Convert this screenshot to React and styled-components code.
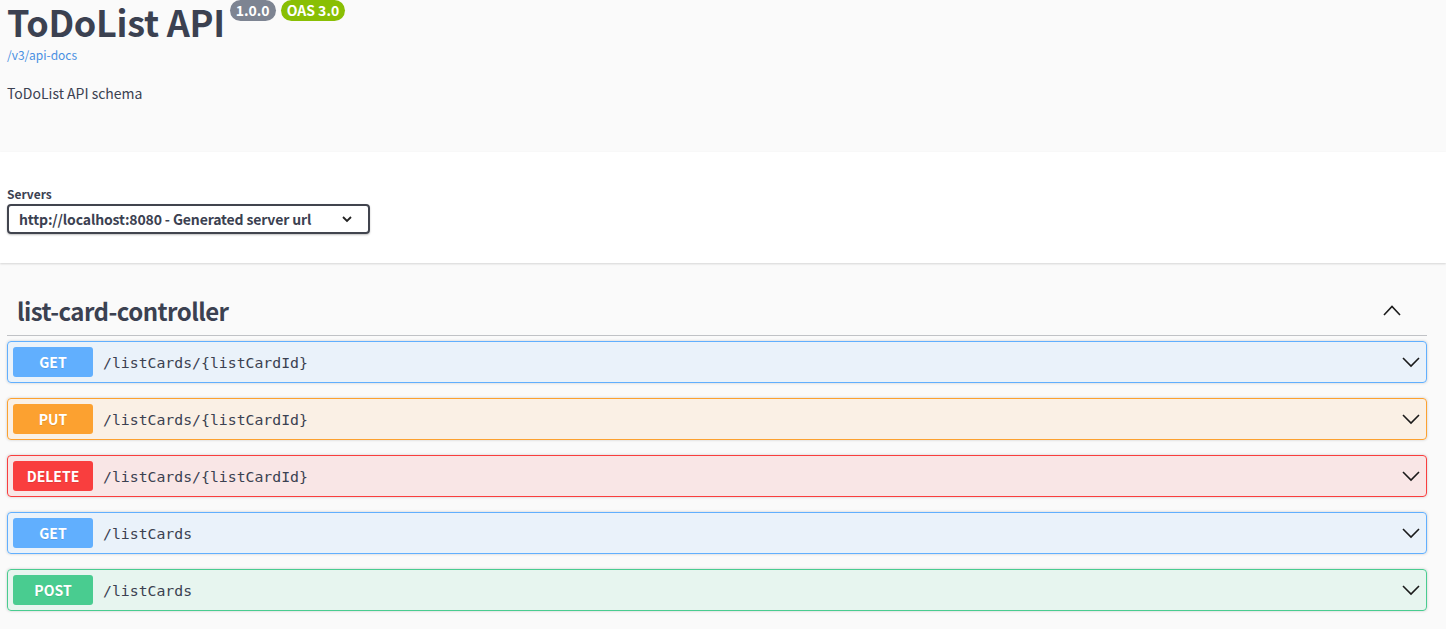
import React from 'react';
import styled, { createGlobalStyle } from 'styled-components';

const Global = createGlobalStyle`
  html, body { margin: 0; padding: 0; background: #fafafa; }
  body { font-family: "Noto Sans CJK KR", "Noto Sans", sans-serif; color: #3b4151; }
`;

const methods = {
  GET: { color: '#61affe', bg: 'rgba(97,175,254,.1)' },
  PUT: { color: '#fca130', bg: 'rgba(252,161,48,.1)' },
  DELETE: { color: '#f93e3e', bg: 'rgba(249,62,62,.1)' },
  POST: { color: '#49cc90', bg: 'rgba(73,204,144,.1)' },
};

const ops = [
  { method: 'GET', path: '/listCards/{listCardId}' },
  { method: 'PUT', path: '/listCards/{listCardId}' },
  { method: 'DELETE', path: '/listCards/{listCardId}' },
  { method: 'GET', path: '/listCards' },
  { method: 'POST', path: '/listCards' },
];

const Info = styled.div`
  background: #fafafa;
  height: 152px;
  padding: 0 7px;
  box-sizing: border-box;
`;

const TitleRow = styled.div`
  display: flex;
  align-items: flex-start;
  gap: 5px;
  height: 42px;
`;

const Title = styled.h2`
  margin: 0;
  font-size: 36px;
  font-weight: 700;
  line-height: 42px;
  color: #3b4151;
  letter-spacing: -0.3px;
`;

const Badge = styled.span`
  display: inline-block;
  background: ${p => p.$bg};
  color: #fff;
  font-size: 14px;
  font-weight: 700;
  line-height: 21px;
  height: 21px;
  padding: 0 6px;
  border-radius: 57px;
`;

const Badges = styled.div`
  display: flex;
  gap: 5px;
`;

const Link = styled.a`
  display: block;
  font-size: 12px;
  color: #4990e2;
  line-height: 16px;
  margin-top: 5px;
  text-decoration: none;
`;

const Description = styled.p`
  margin: 20px 0 0;
  font-size: 14px;
  line-height: 20px;
`;

const SchemeBar = styled.div`
  background: #fff;
  height: 111px;
  box-shadow: 0 1px 2px 0 rgba(0,0,0,.15);
  padding: 34px 7px 0;
  box-sizing: border-box;
`;

const Label = styled.div`
  font-size: 12px;
  font-weight: 700;
  line-height: 16px;
  margin-bottom: 2px;
`;

const Select = styled.div`
  width: 363px;
  height: 30px;
  box-sizing: border-box;
  border: 2px solid #41444e;
  border-radius: 4px;
  box-shadow: 0 1px 2px 0 rgba(0,0,0,.25);
  display: flex;
  align-items: center;
  justify-content: space-between;
  padding: 0 16px 0 10px;
  font-size: 14px;
  font-weight: 700;
  letter-spacing: -0.14px;
  color: #3b4151;
`;

const Content = styled.div`
  padding: 25px 19px 0 7px;
`;

const TagHeader = styled.div`
  display: flex;
  align-items: center;
  justify-content: space-between;
  height: 48px;
  box-sizing: border-box;
  padding: 0 25px 1px 10px;
  border-bottom: 1px solid rgba(59,65,81,.3);
  margin-bottom: 5px;
`;

const TagName = styled.h3`
  margin: 0;
  font-size: 24px;
  font-weight: 700;
  line-height: 30px;
  letter-spacing: -0.55px;
`;

const Op = styled.div`
  display: flex;
  align-items: center;
  height: 42px;
  box-sizing: border-box;
  border: 1px solid ${p => p.$color};
  background: ${p => p.$bg};
  border-radius: 4px;
  box-shadow: 0 0 3px rgba(0,0,0,.19);
  margin-bottom: 15px;
  padding: 0 5px 0 5px;
`;

const Method = styled.span`
  width: 80px;
  height: 30px;
  background: ${p => p.$color};
  border-radius: 3px;
  color: #fff;
  font-size: 14px;
  font-weight: 700;
  display: flex;
  align-items: center;
  justify-content: center;
  text-shadow: 0 1px 0 rgba(0,0,0,.1);
`;

const Path = styled.span`
  flex: 1;
  margin-left: 10px;
  font-family: "DejaVu Sans Mono", "Liberation Mono", monospace;
  font-size: 14.8px;
  color: #3b4151;
`;

const Chevron = ({ up, size = 20 }) => (
  <svg width={size} height={size} viewBox="0 0 20 20">
    <path
      d={up ? 'M2 14 L10 5.5 L18 14' : 'M2 6 L10 14 L18 6'}
      fill="none"
      stroke="#1b1b1b"
      strokeWidth="1.6"
    />
  </svg>
);

const SmallChevron = () => (
  <svg width="10" height="7" viewBox="0 0 10 7">
    <path d="M1 1 L5 5 L9 1" fill="none" stroke="#222" strokeWidth="1.8" />
  </svg>
);

export default function App() {
  return (
    <>
      <Global />
      <Info>
        <TitleRow>
          <Title>ToDoList API</Title>
          <Badges>
            <Badge $bg="#7d8492">1.0.0</Badge>
            <Badge $bg="#89bf04">OAS 3.0</Badge>
          </Badges>
        </TitleRow>
        <Link href="#">/v3/api-docs</Link>
        <Description>ToDoList API schema</Description>
      </Info>
      <SchemeBar>
        <Label>Servers</Label>
        <Select>
          <span>http://localhost:8080 - Generated server url</span>
          <SmallChevron />
        </Select>
      </SchemeBar>
      <Content>
        <TagHeader>
          <TagName>list-card-controller</TagName>
          <Chevron up />
        </TagHeader>
        {ops.map((op, i) => {
          const m = methods[op.method];
          return (
            <Op key={i} $color={m.color} $bg={m.bg}>
              <Method $color={m.color}>{op.method}</Method>
              <Path>{op.path}</Path>
              <Chevron />
            </Op>
          );
        })}
      </Content>
    </>
  );
}
